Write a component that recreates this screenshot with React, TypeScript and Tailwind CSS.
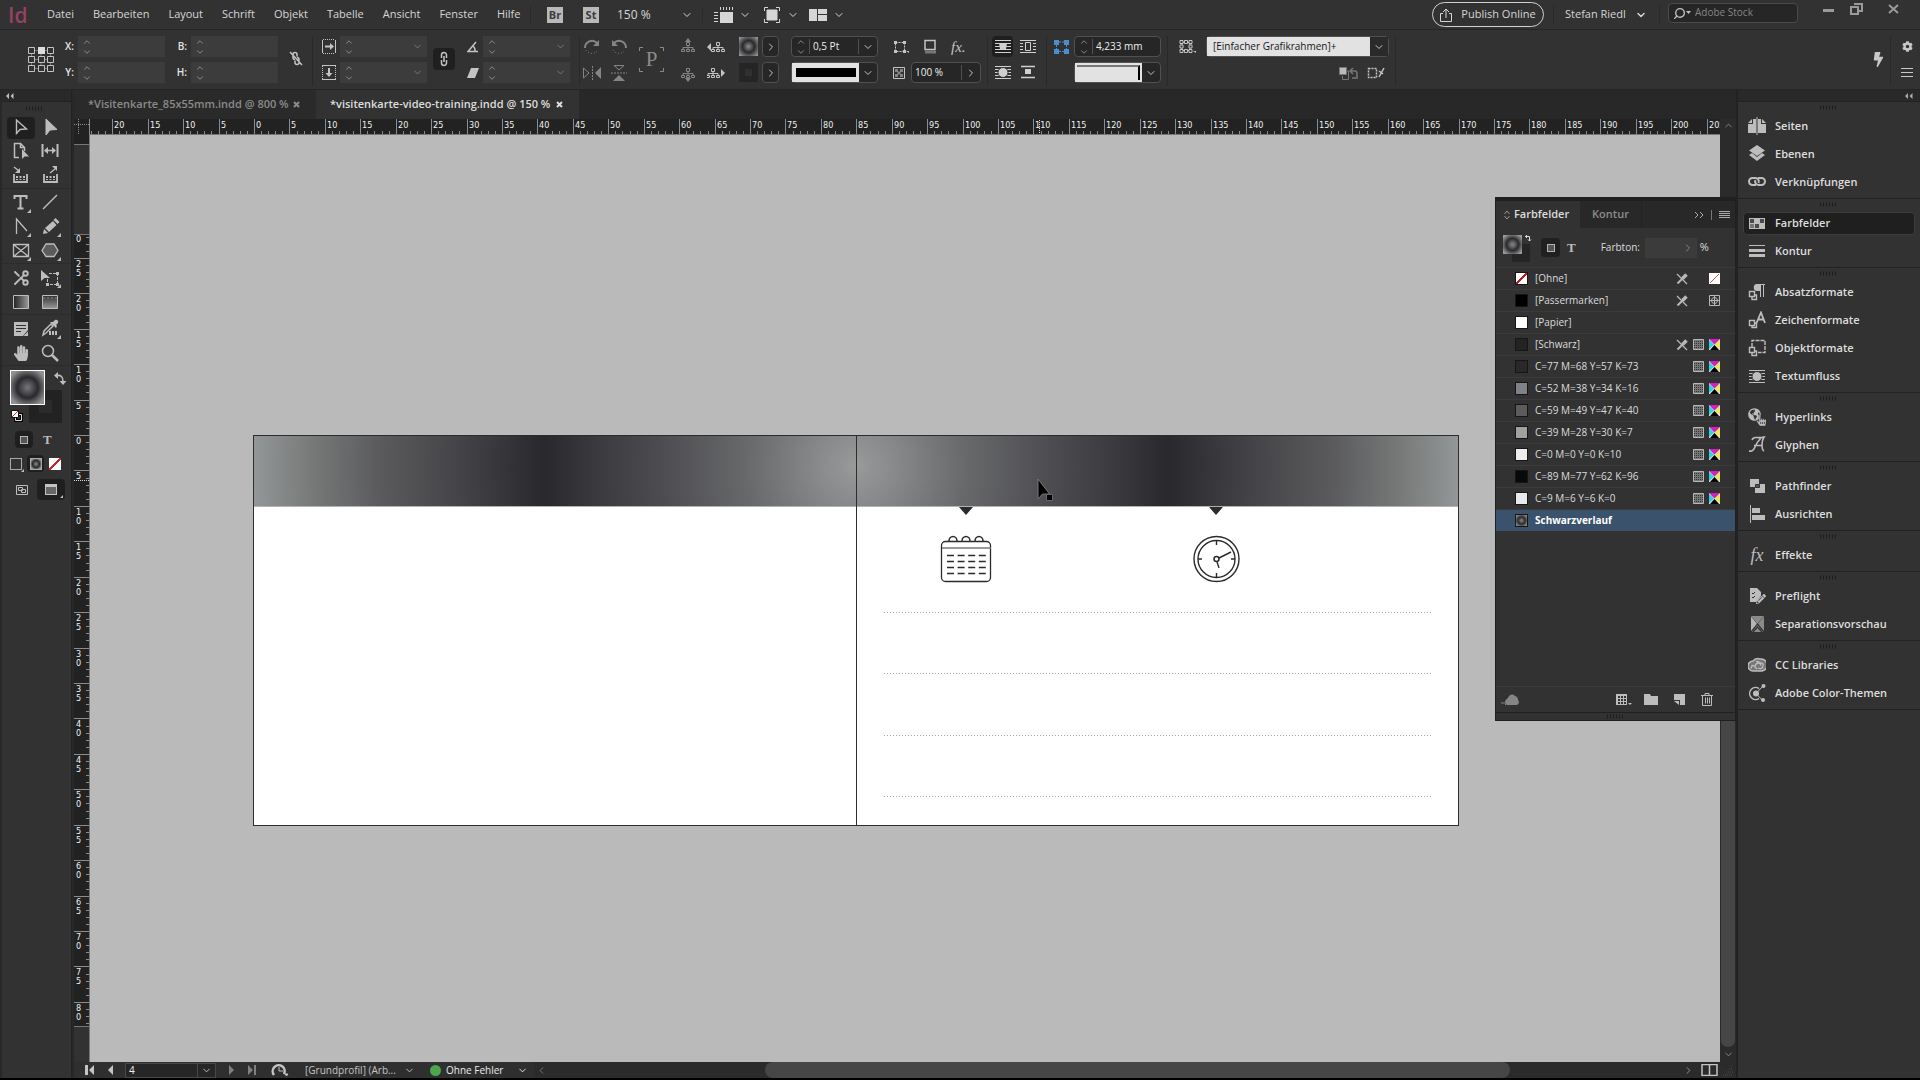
import type { ReactNode } from 'react';
import { FaBolt, FaCog, FaHandPaper, FaGlobeAmericas, FaHandPointer, FaPencilAlt } from 'react-icons/fa';
import { ChevronDown, ChevronRight, ChevronUp, Scissors, Search } from 'lucide-react';

const MM = 7.086;

type IconProps = { w?: number; h?: number; children: ReactNode; className?: string };

function Icon({ w = 18, h = 18, children, className }: IconProps) {
  return (
    <svg width={w} height={h} viewBox={`0 0 ${w} ${h}`} fill="none" stroke="currentColor" className={className} aria-hidden="true">
      {children}
    </svg>
  );
}

function Solid({ w = 18, h = 18, children, className }: IconProps) {
  return (
    <svg width={w} height={h} viewBox={`0 0 ${w} ${h}`} fill="currentColor" className={className} aria-hidden="true">
      {children}
    </svg>
  );
}

/* ---------- Menu bar ---------- */

const menus = ['Datei', 'Bearbeiten', 'Layout', 'Schrift', 'Objekt', 'Tabelle', 'Ansicht', 'Fenster', 'Hilfe'];

function MenuBar() {
  return (
    <header className="flex h-[29px] shrink-0 items-center bg-[#323232] text-xs text-[#d6d6d6]">
      <div className="w-[47px] shrink-0 pl-2 text-[21px] leading-6 font-semibold text-[#964165]">Id</div>
      <nav className="flex w-[483px] shrink-0 gap-[19px] text-[11px]">
        {menus.map((m) => (
          <button key={m}>{m}</button>
        ))}
      </nav>
      <div className="flex shrink-0 items-center border-l border-[#292929]">
        <button className="ml-4 size-4 bg-[#b9b9b9] text-[11px] leading-4 font-bold text-[#3c3c3c]">Br</button>
        <button className="ml-5 size-4 bg-[#b9b9b9] text-[11px] leading-4 font-bold text-[#3c3c3c]">St</button>
        <button className="ml-[18px] flex w-[86px] items-center justify-between border-r border-[#2b2b2b] pr-[9px]">
          150 %<ChevronDown size={12} />
        </button>
        <button className="ml-[11px] flex items-center gap-[6px]" aria-label="Anzeigeoptionen">
          <Solid w={19} h={18}>
            <path d="M6 6h13v11H6z" />
            <path d="M6 1h1v3H6zM9 1h1v3H9zM12 1h1v3h-1zM15 1h1v3h-1zM18 1h1v3h-1zM0 6h4v1H0zM0 9h4v1H0zM0 12h4v1H0zM0 15h4v1H0z" />
          </Solid>
          <ChevronDown size={12} />
        </button>
        <button className="ml-3 flex items-center gap-[6px]" aria-label="Bildschirmmodus">
          <Icon w={18} h={18}>
            <path d="M4 4h10v10H4z" fill="currentColor" />
            <path d="M1.500 5V1.500H5M13 1.500h3.500V5M16.500 13v3.500H13M5 16.500H1.500V13" />
          </Icon>
          <ChevronDown size={12} />
        </button>
        <button className="ml-[10px] flex items-center gap-[6px]" aria-label="Dokumente anordnen">
          <Solid w={18} h={14}>
            <path d="M0 1h8v12H0zM9 1h9v5H9zM9 7h9v6H9z" />
          </Solid>
          <ChevronDown size={12} />
        </button>
      </div>
      <div className="ml-auto flex h-full shrink-0 items-center">
        <button className="flex h-[25px] w-28 items-center justify-center gap-[9px] rounded-full border border-[#d0d0d0] text-[11px]">
          <Icon w={12} h={14}>
            <path d="M3 5.500H.500v8h11v-8H9M6 10V1M3 4l3-3 3 3" />
          </Icon>
          Publish Online
        </button>
        <span className="mx-[9px] h-5 w-px bg-[#2a2a2a]" />
        <button className="ml-[2px] flex w-[82px] items-center justify-between text-[11px]">
          Stefan Riedl
          <ChevronDown size={12} strokeWidth={3} />
        </button>
        <span className="mx-2 ml-3 h-5 w-px bg-[#2a2a2a]" />
        <label className="mb-[3px] flex h-5 w-[130px] items-center gap-1 rounded-sm border border-[#4a4a4a] bg-[#262626] px-1">
          <span className="flex shrink-0 items-center text-[#c2c2c2]">
            <Search size={13} strokeWidth={2.500} className="-scale-x-100" />
            <Solid w={5} h={4}>
              <path d="M0 0h5L2.500 3z" />
            </Solid>
          </span>
          <input aria-label="Adobe Stock" placeholder="Adobe Stock" className="w-full min-w-0 bg-transparent text-[10px] outline-none placeholder:text-[#858585]" />
        </label>
        <div className="mb-3 ml-3 flex text-[#9a9a9a]">
          <button className="flex h-5 w-9 items-center justify-center" aria-label="Minimieren">
            <span className="mt-1 h-[3px] w-[11px] bg-current" />
          </button>
          <button className="flex h-5 w-5 items-center justify-center" aria-label="Wiederherstellen">
            <Icon w={13} h={12}>
              <path d="M4 1h8v7H8M1 4h7v7H1z" strokeWidth="2" />
            </Icon>
          </button>
          <button className="flex h-5 w-[54px] items-center justify-center" aria-label="Schließen">
            <Icon w={11} h={10}>
              <path d="M1 1l9 8M10 1L1 9" strokeWidth="2" />
            </Icon>
          </button>
        </div>
      </div>
    </header>
  );
}

/* ---------- Control bar ---------- */

function Spin() {
  return (
    <span className="flex w-[17px] shrink-0 flex-col items-center justify-center text-[#9a9a9a]">
      <ChevronUp size={10} />
      <ChevronDown size={10} />
    </span>
  );
}

function Field({ label, name, drop }: { label: ReactNode; name: string; drop?: boolean }) {
  return (
    <div className="flex items-center">
      <label htmlFor={name} className="flex w-[19px] shrink-0 justify-end pr-1 text-[10px] font-semibold">
        {label}
      </label>
      <div className="flex h-[21px] w-[87px] items-center bg-[#3c3c3c]">
        <Spin />
        <input id={name} aria-label={name} className="w-full min-w-0 flex-1 bg-transparent text-[10px] outline-none" />
        {drop && <ChevronDown size={11} className="mr-1 shrink-0 text-[#7d7d7d]" />}
      </div>
    </div>
  );
}

function Rows({ children, className = '' }: { children: ReactNode; className?: string }) {
  return <div className={`flex shrink-0 flex-col gap-[5px] ${className}`}>{children}</div>;
}

function Row({ children, className = '' }: { children: ReactNode; className?: string }) {
  return <div className={`flex h-[21px] items-center ${className}`}>{children}</div>;
}

function Split({ className = '' }: { className?: string }) {
  return <span className={`h-[50px] w-px shrink-0 self-start bg-[#292929] ${className}`} />;
}

const boxed = 'flex h-[21px] items-center rounded-sm border border-[#505050] bg-[#262626] text-[10px]';

function GradientChip() {
  return (
    <svg width="19" height="19" viewBox="0 0 19 19" aria-hidden="true">
      <defs>
        <radialGradient id="chip" r="0.7">
          <stop offset="0" stopColor="#8c8c8e" />
          <stop offset="0.45" stopColor="#2a2a2d" />
          <stop offset="1" stopColor="#a3a4a5" />
        </radialGradient>
      </defs>
      <path d="M0 0h19v19H0z" fill="url(#chip)" />
    </svg>
  );
}

function Tree({ arrow }: { arrow: 'up' | 'down' | 'left' | 'right' }) {
  const heads = { up: 'M8 0l3 4H5z', down: 'M8 18l3-4H5z', left: 'M0 9l4-4v8z', right: 'M18 9l-4-4v8z' };
  const side = arrow === 'left' ? 'translate(3 0)' : arrow === 'right' ? 'translate(-2 0)' : undefined;
  return (
    <svg width="18" height="18" viewBox="0 0 18 18" fill="none" stroke="currentColor" aria-hidden="true">
      <path d={heads[arrow]} fill="currentColor" stroke="none" />
      <g transform={side}>
        <path d="M6.500 4.500h3v3h-3zM1.500 11.500h3v2h-3zM6.500 11.500h3v2h-3zM11.500 11.500h3v2h-3zM8 7.500v4M3 11V9.500h10V11" />
      </g>
    </svg>
  );
}

function TextWrap({ kind }: { kind: 'none' | 'box' | 'shape' | 'jump' }) {
  return (
    <Icon w={16} h={15}>
      {kind === 'jump' ? (
        <path d="M1 1.500h14M1 12.500h14" strokeWidth="1.500" />
      ) : (
        <path d="M0 1.500h16M0 4.500h16M0 7.500h16M0 10.500h16M0 13.500h16" />
      )}
      {kind === 'none' && <path d="M4 4h8l-1 6H5z" fill="currentColor" stroke="none" />}
      {kind === 'box' && <path d="M4.500 3.500h7v8h-7z" fill="#323232" stroke="#323232" strokeWidth="3" />}
      {kind === 'box' && <path d="M5.500 3.500h5v8h-5z" />}
      {kind === 'shape' && <circle cx="8" cy="7.500" r="5" fill="currentColor" stroke="#323232" />}
      {kind === 'jump' && <path d="M5 4h6v5H5z" fill="currentColor" stroke="none" />}
    </Icon>
  );
}

function ControlBar() {
  return (
    <section className="flex h-[61px] shrink-0 items-start border-y border-[#252525] bg-[#323232] pt-[6px] text-[#c4c4c4]">
      <button className="mt-[10px] ml-7 shrink-0" aria-label="Bezugspunkt">
        <Icon w={26} h={28}>
          <path d="M6 4.500h14M6 13.500h14M6 22.500h14M3.500 7v14M22.500 7v14M13 7v14" stroke="#777" />
          <path
            d="M.500 1.500h6v6h-6zM19.500 1.500h6v6h-6zM.500 10.500h6v6h-6zM10.500 10.500h6v6h-6zM19.500 10.500h6v6h-6zM.500 19.500h6v6h-6zM10.500 19.500h6v6h-6zM19.500 19.500h6v6h-6z"
            fill="#323232"
          />
          <path d="M10 1h7v7h-7z" fill="#ddd" stroke="none" />
        </Icon>
      </button>
      <Rows className="ml-[5px] text-[#e4e4e4]">
        <Field label="X:" name="x" />
        <Field label="Y:" name="y" />
      </Rows>
      <Rows className="ml-[7px] text-[#e4e4e4]">
        <Field label="B:" name="b" />
        <Field label="H:" name="h" />
      </Rows>
      <button className="mt-[15px] ml-[11px] shrink-0" aria-label="Proportionen">
        <Icon w={14} h={15}>
          <path d="M8 5.500V3.500a2 2 0 0 0-4 0v3a2 2 0 0 0 2 2M6 9.500v2a2 2 0 0 0 4 0v-3a2 2 0 0 0-2-2M1 1l12 13" strokeWidth="1.500" />
        </Icon>
      </button>
      <Split className="ml-[9px]" />
      <Rows className="ml-[8px]">
        <Field
          drop
          name="scale-x"
          label={
            <Icon w={14} h={15}>
              <path d="M.500 1v13M13.500 1v13" />
              <path d="M1 .500h12M1 14.500h12" strokeDasharray="1 1" />
              <path d="M3 7.500h7" strokeWidth="2" />
              <path d="M8 4l4 3.500L8 11z" fill="currentColor" stroke="none" />
            </Icon>
          }
        />
        <Field
          drop
          name="scale-y"
          label={
            <Icon w={14} h={15}>
              <path d="M0 .500h14M0 14.500h14" />
              <path d="M.500 1v13M13.500 1v13" strokeDasharray="1 1" />
              <path d="M7 3v7" strokeWidth="2" />
              <path d="M3.500 8h7L7 12z" fill="currentColor" stroke="none" />
            </Icon>
          }
        />
      </Rows>
      <button className="mt-3 ml-[6px] flex h-[22px] w-[22px] shrink-0 items-center justify-center rounded-sm bg-[#1f1f1f]" aria-label="Verkettung">
        <Icon w={8} h={16}>
          <path d="M1.500 7V4a2.500 2.500 0 0 1 5 0v3M1.500 9v3a2.500 2.500 0 0 0 5 0V9M4 5v6" strokeWidth="1.500" />
        </Icon>
      </button>
      <Rows className="ml-[9px]">
        <Field
          drop
          name="rotate"
          label={
            <Icon w={12} h={12}>
              <path d="M9 1L1 10.500h10M6 5a6 6 0 0 1 2 5" strokeWidth="1.500" />
            </Icon>
          }
        />
        <Field
          drop
          name="shear"
          label={
            <Solid w={12} h={12}>
              <path d="M4 1h8L8 11H0z" />
            </Solid>
          }
        />
      </Rows>
      <Split className="ml-[9px]" />
      <Rows className="ml-[3px] text-[#858585]">
        <Row className="gap-[9px]">
          <button aria-label="Drehen rechts">
            <Icon>
              <path d="M2 10a7 7 0 0 1 12-5" strokeWidth="2" />
              <path d="M16 2v6h-6z" fill="currentColor" stroke="none" />
              <path d="M3 12a7 7 0 0 0 12 0" strokeDasharray="1 2" />
            </Icon>
          </button>
          <button aria-label="Drehen links">
            <Icon>
              <path d="M16 10A7 7 0 0 0 4 5" strokeWidth="2" />
              <path d="M2 2v6h6z" fill="currentColor" stroke="none" />
              <path d="M3 12a7 7 0 0 0 12 0" strokeDasharray="1 2" />
            </Icon>
          </button>
        </Row>
        <Row className="gap-[9px]">
          <button aria-label="Horizontal spiegeln">
            <Icon>
              <path d="M.500 4v10L6 9z" />
              <path d="M9.500 2v14" strokeDasharray="2 1" />
              <path d="M18 3v12l-6-6z" fill="currentColor" stroke="none" />
            </Icon>
          </button>
          <button aria-label="Vertikal spiegeln">
            <Icon>
              <path d="M4 1.500h10L9 6z" />
              <path d="M1 9h16" strokeDasharray="2 1" />
              <path d="M3 17h12l-6-6z" fill="currentColor" stroke="none" />
            </Icon>
          </button>
        </Row>
      </Rows>
      <div className="relative mt-[11px] ml-[11px] flex size-[25px] shrink-0 items-center justify-center font-['Liberation_Serif',serif] text-[21px] text-[#8b8b8b]">
        <Icon w={25} h={25} className="absolute inset-0">
          <path d="M.500 4V.500H4M21 .500h3.500V4M24.500 21v3.500H21M4 24.500H.500V21" />
        </Icon>
        P
      </div>
      <Rows className="ml-4">
        <Row className="gap-[9px]">
          <span className="text-[#858585]">
            <Tree arrow="up" />
          </span>
          <Tree arrow="left" />
        </Row>
        <Row className="gap-[9px]">
          <span className="text-[#858585]">
            <Tree arrow="down" />
          </span>
          <Tree arrow="right" />
        </Row>
      </Rows>
      <Rows className="ml-[14px]">
        <Row className="gap-1">
          <GradientChip />
          <button className={`${boxed} w-[17px] justify-center`} aria-label="Fläche">
            <ChevronRight size={12} />
          </button>
        </Row>
        <Row className="gap-1">
          <span className="flex size-[19px] items-center justify-center bg-[#252525]">
            <span className="size-[7px] bg-[#303030]" />
          </span>
          <button className={`${boxed} w-[17px] justify-center`} aria-label="Kontur">
            <ChevronRight size={12} />
          </button>
        </Row>
      </Rows>
      <Rows className="ml-3">
        <div className={`${boxed} w-[87px]`}>
          <Spin />
          <input aria-label="Konturstärke" defaultValue="0,5 Pt" className="w-0 flex-1 border-x border-[#505050] pl-[3px] text-[#eee] outline-none" />
          <ChevronDown size={12} className="mx-[3px]" />
        </div>
        <button className={`${boxed} w-[87px]`} aria-label="Konturtyp">
          <span className="flex h-full flex-1 items-center justify-center bg-[#e2e2e2]">
            <span className="h-[9px] w-[60px] bg-black" />
          </span>
          <ChevronDown size={12} className="mx-[3px]" />
        </button>
      </Rows>
      <Rows className="ml-[15px]">
        <Row className="w-[88px] gap-[13px]">
          <Icon w={16} h={15}>
            <path d="M2.500 3.500h9v9h-9z" strokeDasharray="2 1" />
            <path d="M1 2h3v3H1zM10 2h3v3h-3zM1 11h3v3H1zM10 11h3v3h-3z" fill="currentColor" stroke="none" />
            <path d="M13 12h3v2z" fill="currentColor" stroke="none" />
          </Icon>
          <Icon w={16} h={15}>
            <path d="M3 1.500h10v9H3z" strokeWidth="1.500" />
            <path d="M3 13h11" strokeWidth="3" stroke="#777" />
          </Icon>
          <button className="font-['Liberation_Serif',serif] text-[15px] leading-4 italic">fx.</button>
        </Row>
        <Row className="gap-[6px]">
          <Icon w={12} h={12}>
            <path d="M.500 .500h11v11H.500z" />
            <path d="M2 2h3v3H2zM7 2h3v3H7zM4.500 4.500h3v3h-3zM2 7h3v3H2zM7 7h3v3H7z" fill="#858585" stroke="none" />
          </Icon>
          <div className={`${boxed} w-[70px]`}>
            <input aria-label="Deckkraft" defaultValue="100 %" className="w-0 flex-1 border-r border-[#505050] pl-[3px] text-[#eee] outline-none" />
            <ChevronRight size={12} className="mx-[3px]" />
          </div>
        </Row>
      </Rows>
      <Split className="ml-[6px]" />
      <Rows className="ml-1 text-[#d0d0d0]">
        <Row className="gap-[7px]">
          <button className="flex size-[21px] items-center justify-center rounded-sm bg-[#1f1f1f]" aria-label="Kein Textumfluss">
            <TextWrap kind="none" />
          </button>
          <button className="w-[18px]" aria-label="Umfließen der Bounding Box">
            <TextWrap kind="box" />
          </button>
        </Row>
        <Row className="gap-[7px]">
          <button className="flex w-[21px] justify-center" aria-label="Umfließen der Objektform">
            <TextWrap kind="shape" />
          </button>
          <button className="w-[18px]" aria-label="Objekt überspringen">
            <TextWrap kind="jump" />
          </button>
        </Row>
      </Rows>
      <Split className="ml-2" />
      <Row className="ml-[7px] text-[#4a8ed0]">
        <Icon w={15} h={15}>
          <path d="M0 1h5v5H0zM10 1h5v5h-5zM0 10h5v5H0zM10 10h5v5h-5z" fill="currentColor" stroke="none" />
          <path d="M5 3h5M5 12.500h5M2.500 6v4M12.500 6v4" strokeDasharray="2 1" />
        </Icon>
      </Row>
      <Rows className="ml-[5px]">
        <div className={`${boxed} w-[87px]`}>
          <Spin />
          <input aria-label="Eckenradius" defaultValue="4,233 mm" className="w-0 flex-1 border-l border-[#505050] pl-[3px] text-[#eee] outline-none" />
        </div>
        <button className={`${boxed} w-[87px]`} aria-label="Eckenform">
          <span className="flex h-full flex-1 bg-[#e2e2e2] p-[2px]">
            <span className="h-full flex-1 border-t-2 border-r-2 border-t-[#777] border-r-black" />
          </span>
          <ChevronDown size={12} className="mx-[3px]" />
        </button>
      </Rows>
      <Split className="ml-[6px]" />
      <Row className="ml-[11px]">
        <Icon w={17} h={15}>
          <path d="M3 3.500h8v8H3z" />
          <path d="M1 1.500h3v3H1zM5.500 1.500h3v3h-3zM10 1.500h3v3h-3zM1 6h3v3H1zM10 6h3v3h-3zM1 10.500h3v3H1zM5.500 10.500h3v3h-3zM10 10.500h3v3h-3z" fill="#323232" />
          <path d="M14 12h3v2z" fill="currentColor" stroke="none" />
        </Icon>
      </Row>
      <Rows className="ml-[10px]">
        <div className={`${boxed} relative w-[183px]`}>
          <select aria-label="Objektformat" className="h-full w-full appearance-none bg-[linear-gradient(to_right,#e2e2e2_163px,#2a2a2a_163px)] pl-[6px] text-[10px] font-medium text-[#161616] outline-none">
            <option>[Einfacher Grafikrahmen]+</option>
          </select>
          <ChevronDown size={12} className="pointer-events-none absolute right-[3px]" />
        </div>
        <Row className="justify-end gap-[9px] pr-1">
          <Icon w={20} h={14}>
            <path d="M1.500 1.500h7v7h-7z" fill="#bbb" stroke="#777" />
            <path d="M4.500 10v3.500h6V5H9" stroke="#777" />
            <path d="M15 2l-3 3 3 3M12 5h5q2 0 2 3v4h-5" stroke="#777" strokeWidth="1.500" />
          </Icon>
          <Icon w={18} h={14}>
            <path d="M1.500 2.500h8v9h-8z" strokeDasharray="2 1" strokeWidth="1.500" />
            <path d="M17 2l-5 9M12 5l4 3" strokeWidth="1.500" />
          </Icon>
        </Row>
      </Rows>
      <Split className="ml-[6px]" />
      <div className="ml-auto flex h-[47px] shrink-0 items-center text-[#c8c8c8]">
        <button aria-label="Schnell anwenden">
          <FaBolt size={15} />
        </button>
        <Split className="mr-[7px] ml-1" />
        <Rows className="w-[22px] items-center pr-1">
          <button className="flex h-[21px] items-center" aria-label="Einstellungen">
            <FaCog size={11} />
          </button>
          <button className="flex h-[21px] items-center" aria-label="Menü">
            <Icon w={12} h={9}>
              <path d="M0 .500h12M0 4.500h12M0 8.500h12" />
            </Icon>
          </button>
        </Rows>
      </div>
    </section>
  );
}

/* ---------- Tools ---------- */

function Collapse() {
  return (
    <Solid w={8} h={6}>
      <path d="M0 3l3-3v6zM4.500 3l3-3v6z" />
    </Solid>
  );
}

function Grip() {
  return (
    <Icon w={18} h={5} className="text-[#1d1d1d]">
      <path d="M0 2.500h18" strokeWidth="4" strokeDasharray="1 2" />
    </Icon>
  );
}

const corner = <path d="M20 16v4h-4z" fill="currentColor" stroke="none" />;

const toolGroups: { name: string; icon: ReactNode; more?: boolean; active?: boolean }[][] = [
  [
    { name: 'Auswahl', active: true, icon: <path d="M5.500 2v13.500L9 11.500l6.500-.500z" strokeWidth="1.400" /> },
    { name: 'Direktauswahl', icon: <path d="M5 1v16l4-5 7-.500z" fill="currentColor" /> },
    {
      name: 'Seite',
      icon: (
        <>
          <path d="M8 15.500H3.500v-14h6l4 4V9M9.500 1.500v4h4" strokeWidth="1.500" />
          <path d="M11 7v10l2.500-2.500H18z" fill="currentColor" stroke="none" />
        </>
      ),
    },
    {
      name: 'Lücke',
      icon: (
        <>
          <path d="M1.500 2v13M16.500 2v13" strokeWidth="2" />
          <path d="M5 8.500h8" strokeWidth="1.500" />
          <path d="M3 8.500L7 5v7zM15 8.500L11 5v7z" fill="currentColor" stroke="none" />
        </>
      ),
    },
    {
      name: 'Inhaltsaufnahme',
      icon: (
        <>
          <path d="M3 8v8h13V8" strokeWidth="1.800" />
          <path d="M5 10h2v2H5zM8.500 10h2v2h-2zM12 10h2v2h-2zM5 13h2v1H5zM8.500 13h2v1h-2zM12 13h2v1h-2z" fill="currentColor" stroke="none" />
          <path d="M3 1l5 4" strokeWidth="1.500" />
          <path d="M9 2v5H4z" fill="currentColor" stroke="none" />
        </>
      ),
    },
    {
      name: 'Inhaltsplatzierung',
      icon: (
        <>
          <path d="M3 8v8h13V8" strokeWidth="1.800" />
          <path d="M5 10h2v2H5zM8.500 10h2v2h-2zM12 10h2v2h-2zM5 13h2v1H5zM8.500 13h2v1h-2zM12 13h2v1h-2z" fill="currentColor" stroke="none" />
          <path d="M9 7l5-4" strokeWidth="1.500" />
          <path d="M11 0h5v5z" fill="currentColor" stroke="none" />
        </>
      ),
    },
  ],
  [
    { name: 'Text', more: true, icon: <path d="M3.500 6V3h12v3M9.500 3v12M6.500 15.500h6" strokeWidth="2" /> },
    { name: 'Linienzeichner', icon: <path d="M2 16L16 2" strokeWidth="1.500" /> },
    { name: 'Zeichenstift', more: true, icon: <path d="M5.500 17V2L16 14" strokeWidth="1.300" /> },
    {
      name: 'Buntstift',
      more: true,
      icon: (
        <>
          <path d="M2 17l1-5 4 4z" fill="currentColor" stroke="none" />
          <path d="M4 11l8-7 3.500 4L8 15z" fill="currentColor" stroke="none" />
          <path d="M12.500 3l2-2 4 4-2 2z" fill="currentColor" stroke="none" />
        </>
      ),
    },
    { name: 'Rechteckrahmen', more: true, icon: <path d="M2.500 3.500h15v12h-15zM2.500 3.500l15 12M17.500 3.500l-15 12" strokeWidth="1.300" /> },
    { name: 'Polygon', more: true, icon: <path d="M5 3h8l4 6.500-4 6H5l-4-6z" fill="#5c5c5c" strokeWidth="1.300" /> },
  ],
  [
    {
      name: 'Schere',
      icon: (
        <g transform="rotate(180 10 10)">
          <Scissors x={1} y={1} width={18} height={18} strokeWidth={2.500} />
        </g>
      ),
    },
    {
      name: 'Frei transformieren',
      more: true,
      icon: (
        <>
          <path d="M0 2v11l3.500-3H9z" fill="currentColor" stroke="none" />
          <path d="M8 5.500h8.500v11h-10V11" strokeDasharray="3 1" />
          <path d="M15 4h3v3h-3zM15 15h3v3h-3zM5 15h3v3H5z" fill="currentColor" stroke="none" />
        </>
      ),
    },
    {
      name: 'Verlaufsfarbfeld',
      icon: (
        <>
          <defs>
            <linearGradient id="toolGrad">
              <stop offset="0" stopColor="#222" />
              <stop offset="1" stopColor="#999" />
            </linearGradient>
          </defs>
          <path d="M2.500 3.500h15v13h-15z" fill="url(#toolGrad)" />
        </>
      ),
    },
    {
      name: 'Weiche Verlaufskante',
      icon: (
        <>
          <defs>
            <linearGradient id="feather" x2="0" y2="1">
              <stop offset="0" stopColor="#333" />
              <stop offset="1" stopColor="#999" />
            </linearGradient>
          </defs>
          <path d="M1.500 3.500h15v13h-15z" fill="url(#feather)" />
          <path d="M2 6h14" stroke="#666" strokeWidth="2" strokeDasharray="2 2" />
        </>
      ),
    },
  ],
  [
    {
      name: 'Notiz',
      icon: (
        <>
          <path d="M3 3h14v8l-5 6H3z" fill="currentColor" stroke="none" />
          <path d="M5 6.500h10M5 9.500h10M5 12.500h5" stroke="#323232" />
          <path d="M17 12.500V17h-4.500z" fill="currentColor" stroke="none" />
        </>
      ),
    },
    {
      name: 'Farbeinstellung',
      more: true,
      icon: (
        <>
          <path d="M2 16l1-4 7-7 2 2-7 7z" strokeWidth="1.500" />
          <path d="M9 3l6 6 1-2-1-1 2-2c1-2-1-4-3-3l-2 2z" fill="currentColor" stroke="none" />
          <path d="M8 14h8" strokeWidth="4" strokeDasharray="2 1" />
        </>
      ),
    },
    { name: 'Hand', icon: <FaHandPaper x={2} y={2} size={16} stroke="none" /> },
    {
      name: 'Zoom',
      icon: (
        <>
          <circle cx="7" cy="8" r="5.500" strokeWidth="1.500" />
          <path d="M11 12l6 6" strokeWidth="2.500" />
        </>
      ),
    },
  ],
];

function Toolbar() {
  return (
    <aside className="flex w-[72px] shrink-0 flex-col border-r border-l-2 border-r-[#222] border-l-[#282828] bg-[#323232] text-[#bdbdbd]">
      <div className="flex h-3 shrink-0 items-center border-b border-[#222] bg-[#292929] pl-1">
        <Collapse />
      </div>
      <div className="flex h-[14px] shrink-0 items-start justify-center pt-1 pr-1">
        <Grip />
      </div>
      {toolGroups.map((group, i) => (
        <div key={i} className="mb-[2px] grid grid-cols-[30px_30px] border-b border-[#2b2b2b] pl-[5px]">
          {group.map((tool) => (
            <button
              key={tool.name}
              aria-label={tool.name}
              className={`my-px flex h-[22px] w-7 items-center justify-center rounded-sm ${tool.active ? 'bg-[#1f1f1f]' : ''}`}
            >
              <svg width="20" height="20" viewBox="0 0 20 20" fill="none" stroke="currentColor">
                {tool.icon}
                {tool.more && corner}
              </svg>
            </button>
          ))}
        </div>
      ))}
      <div className="relative mt-[2px] h-[60px] shrink-0">
        <span className="absolute top-5 left-[27px] size-[33px] border-[10px] border-[#222] bg-[#2b2b2b]" />
        <span className="absolute top-0 left-2 size-[35px] border border-white bg-[radial-gradient(circle,#77777a_0%,#2a2a2e_45%,#919294_85%)]" />
        <Icon w={12} h={13} className="absolute top-[2px] left-[52px]">
          <path d="M3 3.500q6-1 6 6" strokeWidth="1.500" />
          <path d="M0 3.500L4 0v7zM9 13L5.500 9h7z" fill="currentColor" stroke="none" />
        </Icon>
        <Icon w={12} h={12} className="absolute top-10 left-[9px]">
          <path d="M4.500 4.500h6v6h-6z" stroke="#000" strokeWidth="3" />
          <path d="M4.500 4.500h6v6h-6z" stroke="#ddd" />
          <path d="M.500 .500h7v7h-7z" fill="#fff" stroke="#111" />
          <path d="M1 7l6-6" stroke="#d22" />
        </Icon>
      </div>
      <div className="mt-px flex items-center gap-[10px] pl-[13px]">
        <button className="flex h-[17px] w-[18px] items-center justify-center rounded-sm bg-[#1f1f1f]" aria-label="Formatierung Rahmen">
          <span className="size-2 border border-[#b5b5b5] bg-[#555]" />
        </button>
        <button className="font-['Liberation_Serif',serif] text-[13px] leading-4 font-bold">T</button>
      </div>
      <div className="mt-[7px] flex items-center gap-[5px] pl-2">
        <button className="relative size-3 border border-[#aaa]" aria-label="Farbe anwenden">
          <Solid w={3} h={3} className="absolute -right-[3px] -bottom-[3px]">
            <path d="M3 0v3H0z" />
          </Solid>
        </button>
        <button className="flex size-[17px] items-center justify-center rounded-sm bg-[#1f1f1f]" aria-label="Verlauf anwenden">
          <span className="size-3 border border-[#aaa] bg-[radial-gradient(circle,#777_10%,#2a2a2e_50%,#999_85%)]" />
        </button>
        <button className="size-3 bg-[linear-gradient(135deg,#fff_44%,#c22a2a_44%,#c22a2a_56%,#fff_56%)]" aria-label="Ohne anwenden" />
      </div>
      <div className="mt-[7px] flex items-center gap-[9px] pl-[14px]">
        <button aria-label="Vorschau">
          <Icon w={12} h={12}>
            <path d="M.500 1.500h11v9H.500zM2.500 3.500h4v3h-4zM5.500 5.500h4v3h-4z" />
          </Icon>
        </button>
        <button className="relative flex h-[21px] w-7 items-center justify-center rounded-sm bg-[#1f1f1f]" aria-label="Normal">
          <span className="h-[11px] w-3 border border-t-[3px] border-[#c4c4c4] bg-[#666]" />
          <Solid w={3} h={3} className="absolute right-[2px] bottom-[2px]">
            <path d="M3 0v3H0z" />
          </Solid>
        </button>
      </div>
    </aside>
  );
}

/* ---------- Rulers ---------- */

const rulerFont = "font-['DejaVu_Sans_Condensed',sans-serif] text-[9px]";

function HorizontalRuler() {
  const origin = 164;
  const ticks = Array.from({ length: 229 }, (_, i) => i - 23);
  return (
    <svg className={`h-4 w-0 flex-1 overflow-hidden bg-[#222] ${rulerFont}`} aria-hidden="true">
      {ticks.map((mm) => {
        const x = Math.round(origin + mm * MM);
        const major = mm % 5 === 0;
        return (
          <g key={mm}>
            <rect x={x} y={major ? 0 : 12} width="1" height={major ? 16 : 4} fill="#8c8c8c" />
            {major && (
              <text x={x + 2} y="9" fill="#f0f0f0">
                {Math.abs(mm)}
              </text>
            )}
          </g>
        );
      })}
      <path d="M949.500 1v15" stroke="#ddd" strokeDasharray="1 1" />
      <rect y="15" width="100%" height="1" fill="#777" />
    </svg>
  );
}

function VerticalRuler() {
  const origin = 300;
  const ticks = Array.from({ length: 112 }, (_, i) => i - 28);
  return (
    <svg className={`h-full w-4 shrink-0 overflow-hidden bg-[#323232] ${rulerFont}`} aria-hidden="true">
      <path d="M0 0h16v9H0zM0 99h16v792H0z" fill="#222" />
      <path d="M0 9.500h16M0 99.500h16M0 891.500h16" stroke="#777" />
      {ticks.map((mm) => {
        const y = Math.round(origin + mm * MM);
        const major = mm % 5 === 0;
        return (
          <g key={mm} fill="#f0f0f0">
            <rect x={major ? 0 : 12} y={y} width={major ? 16 : 4} height="1" fill="#8c8c8c" />
            {major &&
              String(Math.abs(mm))
                .split('')
                .map((d, i) => (
                  <text key={i} x="2" y={y + 9 + i * 9}>
                    {d}
                  </text>
                ))}
          </g>
        );
      })}
      <text x="2" y="107" fill="#f0f0f0">
        0
      </text>
      <path d="M0 345.500h16" stroke="#ddd" strokeDasharray="1 1" />
      <rect x="15" width="1" height="100%" fill="#777" />
    </svg>
  );
}

/* ---------- Document ---------- */

function Spread() {
  const arcs = [953, 966, 979];
  const rows = [555.5, 561.5, 567.5, 573.5];
  return (
    <div className="absolute top-[300px] left-[163px] flex h-[391px] w-[1206px] flex-col border border-[#2b2d2e] bg-white">
      <div className="h-[71px] border-b border-[#b5b3b0] bg-[radial-gradient(circle_at_602px_30px,#989b9a_0px,#8b8d8e_30px,#68696b_110px,#4d4d51_195px,#3c3b40_255px,#29282c_313px,#454448_400px,#5a5a5c_475px,#757777_540px,#949797_604px)]" />
      <span className="absolute top-0 left-[602px] h-full w-px bg-[#2b2d2e]" />
      <svg className="absolute top-0 left-[603px] h-full w-[601px]" viewBox="857 436 601 389" fill="none" stroke="#2b2b2d">
        <path d="M959 507h14l-7 8zM1209 507h14l-7 8z" fill="#2b2b2d" stroke="none" />
        {arcs.map((x) => (
          <path key={x} d={`M${x - 4} 541a4 4.500 0 0 1 8 0`} strokeWidth="1.500" />
        ))}
        <rect x="941.500" y="541.500" width="49" height="40" rx="4" strokeWidth="1.300" />
        <path d="M942 548h49" strokeWidth="1.600" stroke="#77777a" />
        {rows.map((y) => (
          <path key={y} d={`M947 ${y}h39`} strokeWidth="1.500" strokeDasharray="7 3.600" />
        ))}
        <circle cx="1216.500" cy="559" r="22.500" strokeWidth="1.400" />
        <circle cx="1216.500" cy="559" r="18.500" strokeWidth="1.400" />
        <circle cx="1216.500" cy="559" r="2.500" strokeWidth="1.500" />
        <path d="M1219 558l12-6M1217 562l2 6M1216.500 541v4M1216.500 573v4M1198 559h4M1231 559h4" strokeWidth="1.400" />
        <path d="M884 612.500h548M884 673.500h548M884 735.500h548M884 796.500h548" stroke="#a4a4a4" strokeDasharray="1 2" />
        <path d="M1038 479v20l4.500-5h7z" fill="#000" stroke="#777" />
        <path d="M1046.500 494.500h6v6h-6z" fill="#000" stroke="#666" />
      </svg>
    </div>
  );
}

/* ---------- Swatches panel ---------- */

type Kind = 'none' | 'registration' | 'paper' | 'black' | 'process' | 'gradient';

const swatches: { name: string; fill: string; kind: Kind }[] = [
  { name: '[Ohne]', fill: 'bg-[linear-gradient(135deg,#fff_44%,#b32020_44%,#b32020_56%,#fff_56%)]', kind: 'none' },
  { name: '[Passermarken]', fill: 'bg-black', kind: 'registration' },
  { name: '[Papier]', fill: 'bg-white', kind: 'paper' },
  { name: '[Schwarz]', fill: 'bg-[#232323]', kind: 'black' },
  { name: 'C=77 M=68 Y=57 K=73', fill: 'bg-[#29292c]', kind: 'process' },
  { name: 'C=52 M=38 Y=34 K=16', fill: 'bg-[#7f8187]', kind: 'process' },
  { name: 'C=59 M=49 Y=47 K=40', fill: 'bg-[#5c5c5c]', kind: 'process' },
  { name: 'C=39 M=28 Y=30 K=7', fill: 'bg-[#a1a1a1]', kind: 'process' },
  { name: 'C=0 M=0 Y=0 K=10', fill: 'bg-[#ededed]', kind: 'process' },
  { name: 'C=89 M=77 Y=62 K=96', fill: 'bg-[#070a0a]', kind: 'process' },
  { name: 'C=9 M=6 Y=6 K=0', fill: 'bg-[#e8e9ec]', kind: 'process' },
  { name: 'Schwarzverlauf', fill: 'bg-[radial-gradient(circle,#777_10%,#2a2a2e_45%,#888_85%)]', kind: 'gradient' },
];

function SwatchFlags({ kind }: { kind: Kind }) {
  const locked = kind === 'none' || kind === 'registration' || kind === 'black';
  const process = kind === 'black' || kind === 'process';
  return (
    <span className="ml-auto flex items-center gap-[5px] pr-[15px] text-[#b8b8b8]">
      {locked && (
        <Icon w={12} h={12}>
          <path d="M1.500 10.500L7 5" strokeWidth="2" />
          <path d="M6.500 5.500L10.500 1.500" strokeWidth="3.500" />
          <path d="M1 1l10 10" strokeWidth="1.300" />
        </Icon>
      )}
      {process ? (
        <Icon w={11} h={11}>
          <path d="M.500 .500h10v10H.500z" fill="#777" />
          <path d="M1 2.500h9M1 4.500h9M1 6.500h9M1 8.500h9" stroke="#333" strokeDasharray="1 1" />
        </Icon>
      ) : (
        <span className="w-[11px]" />
      )}
      {process && (
        <svg width="11" height="11" viewBox="0 0 11 11" aria-hidden="true">
          <path d="M0 0h11v11H0z" fill="#ddd" />
          <path d="M0 0h11L5.500 5.500z" fill="#d01fc0" />
          <path d="M0 1v9l5-4.500z" fill="#2ad4e0" />
          <path d="M11 1v9L6 5.500z" fill="#f0e850" />
          <path d="M1 11h9L5.500 6z" fill="#000" />
        </svg>
      )}
      {kind === 'none' && (
        <Icon w={11} h={11}>
          <path d="M0 0h11v11H0z" fill="#fff" stroke="none" />
          <path d="M1 10l9-9" stroke="#c55" />
        </Icon>
      )}
      {kind === 'registration' && (
        <Icon w={11} h={11}>
          <path d="M.500 .500h10v10H.500zM5.500 0v11M0 5.500h11" />
          <circle cx="5.500" cy="5.500" r="3" />
        </Icon>
      )}
    </span>
  );
}

function SwatchesPanel() {
  return (
    <section className="absolute top-[107px] right-0 z-10 flex h-[524px] w-[241px] flex-col border-x border-t-4 border-[#202020] bg-[#323232] text-[10px] text-[#dcdcdc]">
      <div className="flex h-[27px] shrink-0 items-stretch bg-[#282828] text-[11px] font-semibold">
        <button className="flex w-[84px] items-center gap-1 bg-[#323232] pl-2">
          <Icon w={6} h={10} className="text-[#999]">
            <path d="M.500 4L3 1l2.500 3M.500 6L3 9l2.500-3" />
          </Icon>
          Farbfelder
        </button>
        <button className="w-[62px] border-r border-[#222] text-[#8c8c8c]">Kontur</button>
        <div className="ml-auto flex items-center gap-[7px] pr-[5px] text-[#aaa]">
          <Icon w={10} h={8}>
            <path d="M1 1l3 3-3 3M6 1l3 3-3 3" />
          </Icon>
          <span className="h-[10px] w-px bg-[#777]" />
          <button aria-label="Bedienfeldmenü">
            <Icon w={11} h={8}>
              <path d="M0 .500h11M0 2.500h11M0 4.500h11M0 6.500h11" />
            </Icon>
          </button>
        </div>
      </div>
      <div className="flex h-[39px] shrink-0 items-center pl-[7px]">
        <div className="relative size-[26px]">
          <span className="absolute top-[9px] left-[9px] size-[18px] bg-[#252525]" />
          <span className="absolute top-0 left-0 size-[19px] bg-[radial-gradient(circle,#777_10%,#2a2a2e_45%,#999_85%)]" />
          <Icon w={7} h={7} className="absolute top-0 left-[22px]">
            <path d="M0 1.500h4.500V6M2 0L.500 1.500 2 3M3 4.500L4.500 6 6 4.500" />
          </Icon>
        </div>
        <button className="ml-3 flex size-[19px] items-center justify-center rounded-sm bg-[#202020]" aria-label="Rahmen">
          <span className="size-2 border border-[#b5b5b5] bg-[#555]" />
        </button>
        <button className="ml-[7px] font-['Liberation_Serif',serif] text-[13px] font-bold text-[#bdbdbd]">T</button>
        <label htmlFor="tint" className="ml-[25px] w-11">
          Farbton:
        </label>
        <div className="flex h-5 w-[52px] items-center bg-[#3b3b3b]">
          <input id="tint" className="w-0 flex-1 outline-none" />
          <ChevronRight size={12} className="mr-[3px] text-[#888]" />
        </div>
        <span className="ml-[3px] text-[11px]">%</span>
      </div>
      <ul className="flex-1">
        {swatches.map((s) => (
          <li
            key={s.name}
            className={`flex h-[22px] items-center border-t border-[#3b3b3b] pl-[19px] ${s.kind === 'gradient' ? 'bg-[#3a526b] font-bold text-white' : 'font-medium'}`}
          >
            <span className={`mr-[7px] size-[13px] border border-[#161616] ${s.fill}`} />
            {s.name}
            <SwatchFlags kind={s.kind} />
          </li>
        ))}
      </ul>
      <div className="flex h-[26px] shrink-0 items-center border-t border-[#3b3b3b] pl-[5px] text-[#bdbdbd]">
        <Icon w={19} h={12} className="text-[#858585]">
          <path d="M5 10a4 4 0 0 1 2-6 4 4 0 0 1 7-2 4 4 0 0 1 3 4 3 3 0 0 1-1 5H6z" fill="currentColor" stroke="none" />
          <path d="M0 9h6M4 7l2 2-2 2" />
        </Icon>
        <div className="ml-auto flex items-center gap-3 pr-[22px]">
          <button aria-label="Ansicht">
            <Solid w={16} h={12}>
              <path d="M0 0h11v11H0z" />
              <path d="M2 2h2v2H2zM5 2h2v2H5zM8 2h2v2H8zM2 5h2v2H2zM5 5h2v2H5zM8 5h2v2H8zM2 8h2v2H2zM5 8h2v2H5zM8 8h2v2H8z" fill="#323232" />
              <path d="M12 9h4l-2 2z" />
            </Solid>
          </button>
          <button aria-label="Neue Farbgruppe">
            <Solid w={14} h={11}>
              <path d="M0 0h6l1 2h7v9H0z" />
            </Solid>
          </button>
          <button className="ml-1" aria-label="Neues Farbfeld">
            <Solid w={11} h={11}>
              <path d="M0 0h11v11H6V6H0z" />
              <path d="M0 7h5v4z" />
            </Solid>
          </button>
          <button className="ml-1" aria-label="Löschen">
            <Icon w={12} h={13}>
              <path d="M0 2.500h12M4 2V.500h4V2M1.500 3v9.500h9V3M4.500 4.500v6M6.500 4.500v6M8.500 4.500v6" />
            </Icon>
          </button>
        </div>
      </div>
      <div className="flex h-[9px] shrink-0 items-center justify-center border-y border-[#202020]">
        <Grip />
      </div>
    </section>
  );
}

/* ---------- Dock ---------- */

const dockGroups: { name: string; icon: ReactNode; active?: boolean }[][] = [
  [
    {
      name: 'Seiten',
      icon: (
        <>
          <path d="M0 6l4-4v4zM18 6l-4-4v4z" fill="currentColor" stroke="none" />
          <path d="M0 7h5V2h3v14H0zM18 7h-5V2h-3v14h8z" fill="currentColor" stroke="none" />
          <path d="M9 0v18" />
        </>
      ),
    },
    {
      name: 'Ebenen',
      icon: (
        <>
          <path d="M9 0l8 5.500L9 11 1 5.500z" fill="currentColor" stroke="none" />
          <path d="M1 10l3-2 5 4 5-4 3 2-8 6z" fill="currentColor" stroke="none" />
        </>
      ),
    },
    {
      name: 'Verknüpfungen',
      icon: (
        <>
          <path d="M8 12H4.500a3.500 3.500 0 0 1 0-7h3a3.500 3.500 0 0 1 3 5" strokeWidth="2" />
          <path d="M10 5h3.500a3.500 3.500 0 0 1 0 7h-3a3.500 3.500 0 0 1-3-5" strokeWidth="2" />
        </>
      ),
    },
  ],
  [
    {
      name: 'Farbfelder',
      active: true,
      icon: (
        <>
          <path d="M1 4h16v11H1z" fill="currentColor" stroke="none" />
          <path d="M2 5h4v4H2zM12 5h4v4h-4zM7 10h4v4H7z" fill="#4a4a4a" stroke="none" />
          <path d="M2 10h4v4H2z" fill="#777" stroke="none" />
        </>
      ),
    },
    { name: 'Kontur', icon: <path d="M1 3h16v1H1zM1 7h16v3H1zM1 12h16v3H1z" fill="currentColor" stroke="none" /> },
  ],
  [
    {
      name: 'Absatzformate',
      icon: (
        <>
          <path d="M9 1h8v1h-1v12h-1V2h-2v12h-1V8H9.500a3.500 3.500 0 0 1-.500-7z" fill="currentColor" stroke="none" />
          <path d="M1.500 8.500h5v5h-5zM4 14v2.500h4.500V12H7" strokeWidth="1.400" />
        </>
      ),
    },
    {
      name: 'Zeichenformate',
      icon: (
        <>
          <path d="M8.500 12L13 1.500 17 12M10 8.500h6" strokeWidth="1.800" />
          <path d="M1.500 9.500h5v5h-5zM4 14v2.500h4.500V12H7" strokeWidth="1.400" />
        </>
      ),
    },
    {
      name: 'Objektformate',
      icon: (
        <>
          <path d="M4 8V1.500h13v12h-7" strokeDasharray="4 1" strokeWidth="1.400" />
          <path d="M1.500 8.500h5v5h-5zM4 14v2.500h4.500V12H7" strokeWidth="1.400" />
        </>
      ),
    },
    {
      name: 'Textumfluss',
      icon: (
        <>
          <path d="M1 3.500h16M1 6.500h16M1 9.500h16M1 12.500h16M1 15.500h16" />
          <circle cx="9" cy="9.500" r="5" fill="currentColor" stroke="#323232" />
        </>
      ),
    },
  ],
  [
    {
      name: 'Hyperlinks',
      icon: (
        <>
          <FaGlobeAmericas x={0} y={0} size={13} stroke="none" />
          <FaHandPointer x={8} y={7} size={11} stroke="#323232" strokeWidth={20} />
        </>
      ),
    },
    {
      name: 'Glyphen',
      icon: (
        <path d="M4 4q1-3 5-2.500 4 .500 7-.500-2 3-2 8t2 6M13 2Q9 6 7 11t-6 4M6 9.500h8" strokeWidth="1.600" />
      ),
    },
  ],
  [
    {
      name: 'Pathfinder',
      icon: (
        <>
          <path d="M2 2h9v8H2zM7 7h10v9H7z" fill="currentColor" stroke="none" />
          <path d="M7.500 7.500h4v3h-4z" fill="#555" stroke="#323232" />
        </>
      ),
    },
    { name: 'Ausrichten', icon: <path d="M2 0h1v18H2zM4 3h8v5H4zM4 10h13v5H4z" fill="currentColor" stroke="none" /> },
  ],
  [{ name: 'Effekte', icon: null }],
  [
    {
      name: 'Preflight',
      icon: (
        <>
          <path d="M2 1h7l4 4v4l-5 6H2z" fill="currentColor" stroke="none" />
          <path d="M4 6l1 1 2-2M4 10l1 1 2-2" stroke="#323232" />
          <FaPencilAlt x={8} y={7} size={10} stroke="none" />
        </>
      ),
    },
    {
      name: 'Separationsvorschau',
      icon: (
        <>
          <path d="M3 1h13v16H3z" fill="#8a8a8a" stroke="none" />
          <path d="M3 1v16l6.500-8z" fill="#b5b5b5" stroke="none" />
          <path d="M3 1l6.500 8L16 1" stroke="#666" />
          <path d="M3 17l6.500-8 6.500 8M5 17l4.500-5 4.500 5" stroke="#323232" strokeWidth="1.200" />
        </>
      ),
    },
  ],
  [
    {
      name: 'CC Libraries',
      icon: (
        <>
          <path d="M5 15a5 5 0 0 1 0-10 6 6 0 0 1 7-2 6 6 0 0 1 2 12z" fill="#777" strokeWidth="1.500" />
          <path d="M9 13L5.500 9.500a2 2 0 0 0-2 3M8 5.500q4 0 5 4M10 12q4 2 5-2t-4-3-3 3" strokeWidth="1.300" />
        </>
      ),
    },
    {
      name: 'Adobe Color-Themen',
      icon: (
        <>
          <path d="M11 4.500a6 6 0 1 0 0 10" strokeWidth="1.500" />
          <circle cx="8" cy="9.500" r="3" fill="currentColor" stroke="none" />
          <path d="M8 9.500L15 2M8 9.500L15 17" />
          <circle cx="15.500" cy="2" r="2" fill="currentColor" stroke="none" />
          <circle cx="15" cy="16" r="2" fill="currentColor" stroke="none" />
        </>
      ),
    },
  ],
];

function Dock() {
  return (
    <aside className="flex w-[184px] shrink-0 flex-col border-l-2 border-[#222] bg-[#323232]">
      <div className="flex h-3 shrink-0 items-center justify-end border-b border-[#222] bg-[#292929] pr-[7px] text-[#aaa]">
        <Collapse />
      </div>
      {dockGroups.map((group, i) => (
        <div key={i} className={`border-[#222] px-[5px] pb-[2px] ${i > 0 ? 'border-t' : ''}`}>
          <div className="flex h-[10px] items-center justify-center">
            <Grip />
          </div>
          {group.map((item) => (
            <div key={item.name} className="flex h-7 items-center">
              <button
                className={`flex h-[23px] w-full items-center gap-[9px] rounded-sm border pl-1 text-[11px] font-semibold text-[#dedede] ${
                  item.active ? 'border-[#3c3c3c] bg-[#1f1f1f]' : 'border-transparent'
                }`}
              >
                {item.icon ? (
                  <Icon className="text-[#bdbdbd]">{item.icon}</Icon>
                ) : (
                  <span className="w-[18px] text-center font-['Liberation_Serif',serif] text-[18px] leading-4 font-normal text-[#bdbdbd] italic">fx</span>
                )}
                {item.name}
              </button>
            </div>
          ))}
        </div>
      ))}
      <div className="flex-1 border-t border-[#222]" />
    </aside>
  );
}

/* ---------- Status bar ---------- */

function StatusBar() {
  return (
    <footer className="flex h-4 shrink-0 items-center bg-[#2b2b2b] text-[10px] text-[#c4c4c4]">
      <div className="flex h-full w-[460px] shrink-0 items-center bg-[#2f2f2f] pl-[11px]">
        <button aria-label="Erste Seite">
          <Solid w={10} h={10}>
            <path d="M0 0h3v10H0zM9 0v10L4 5z" />
          </Solid>
        </button>
        <button className="ml-[13px]" aria-label="Vorherige Seite">
          <Solid w={5} h={10}>
            <path d="M5 0v10L0 5z" />
          </Solid>
        </button>
        <div className="ml-3 flex h-[15px] w-[91px] items-center border border-[#484848] bg-[#262626]">
          <input aria-label="Seite" defaultValue="4" className="w-0 flex-1 border-r border-[#484848] pl-[3px] text-[#eee] outline-none" />
          <ChevronDown size={11} className="mx-[3px]" />
        </div>
        <button className="ml-[13px] text-[#808080]" aria-label="Nächste Seite">
          <Solid w={5} h={10}>
            <path d="M0 0v10l5-5z" />
          </Solid>
        </button>
        <button className="ml-[14px] text-[#808080]" aria-label="Letzte Seite">
          <Solid w={9} h={10}>
            <path d="M0 0v10l5-5zM6 0h2v10H6z" />
          </Solid>
        </button>
        <Icon w={18} h={14} className="ml-[14px]">
          <path d="M3 12a6 6 0 1 1 10-1" strokeWidth="2.500" />
          <path d="M8 4v4h4" />
          <path d="M14 11h3l-1.500 2z" fill="currentColor" />
        </Icon>
        <button className="ml-4 flex w-[110px] items-center justify-between whitespace-nowrap">
          [Grundprofil] (Arb...
          <ChevronDown size={11} />
        </button>
        <span className="ml-[15px] size-[11px] shrink-0 rounded-full bg-[#4ca64c]" />
        <button className="ml-[5px] flex w-[82px] items-center justify-between whitespace-nowrap text-[#ececec]">
          Ohne Fehler
          <ChevronDown size={11} />
        </button>
      </div>
      <div className="flex h-full flex-1 items-center">
        <ChevronRight size={11} className="ml-[2px] rotate-180 text-[#777]" />
        <div className="flex flex-1 px-1">
          <span className="h-4 w-[19%]" />
          <span className="h-4 w-[66%] rounded-full bg-[#464646]" />
        </div>
        <ChevronRight size={11} className="mr-[7px] text-[#999]" />
        <Icon w={17} h={12}>
          <path d="M1 .500h15v11H1zM8.500 0v12" strokeWidth="1.500" />
        </Icon>
        <Icon w={12} h={12} className="mx-[3px] text-[#4c4c4c]">
          <path d="M2 11h10M5 8h7M8 5h4M10 2h2" strokeDasharray="1 1" />
        </Icon>
      </div>
    </footer>
  );
}

/* ---------- Document window ---------- */

function DocumentWindow() {
  return (
    <main className="relative flex min-w-0 flex-1 flex-col bg-[#282828] pl-[2px]">
      <div className="flex h-[29px] shrink-0 text-[11px] font-semibold">
        <div className="flex w-[242px] items-center justify-between bg-[#2a2a2a] pr-4 pl-[14px] text-[#8b8b8b]">
          <button className="whitespace-nowrap">*Visitenkarte_85x55mm.indd @ 800 %</button>
          <button aria-label="Tab schließen">
            <Icon w={7} h={7}>
              <path d="M1 1l5 5M6 1L1 6" strokeWidth="2" />
            </Icon>
          </button>
        </div>
        <div className="flex w-[263px] items-center justify-between bg-[#323232] pr-4 pl-[14px] text-[#dedede]">
          <button className="whitespace-nowrap">*visitenkarte-video-training.indd @ 150 %</button>
          <button aria-label="Aktiven Tab schließen">
            <Icon w={7} h={7}>
              <path d="M1 1l5 5M6 1L1 6" strokeWidth="2" />
            </Icon>
          </button>
        </div>
      </div>
      <div className="flex min-h-0 flex-1">
        <div className="flex min-w-0 flex-1 flex-col">
          <div className="flex h-4 shrink-0">
            <Icon w={16} h={16} className="bg-[#222] text-[#8c8c8c]">
              <path d="M4.500 0v16M0 5.500h16" strokeDasharray="1 1" />
              <path d="M15.500 0v16" />
            </Icon>
            <HorizontalRuler />
          </div>
          <div className="flex min-h-0 flex-1">
            <VerticalRuler />
            <div className="relative flex-1 overflow-hidden bg-[#bababa]">
              <Spread />
            </div>
          </div>
        </div>
        <div className="flex w-4 shrink-0 flex-col items-center bg-[#2b2b2b] text-[#888]">
          <ChevronUp size={11} className="my-px shrink-0" />
          <span className="mt-20 w-[14px] flex-1 rounded-full bg-[#464646]" />
          <ChevronDown size={11} className="my-[2px] shrink-0" />
        </div>
      </div>
      <StatusBar />
      <SwatchesPanel />
    </main>
  );
}

export default function App() {
  return (
    <div className="flex h-screen flex-col overflow-hidden border-b-2 border-black bg-[#323232] font-['Open_Sans',sans-serif]">
      <MenuBar />
      <ControlBar />
      <div className="flex min-h-0 flex-1">
        <Toolbar />
        <DocumentWindow />
        <Dock />
      </div>
    </div>
  );
}
